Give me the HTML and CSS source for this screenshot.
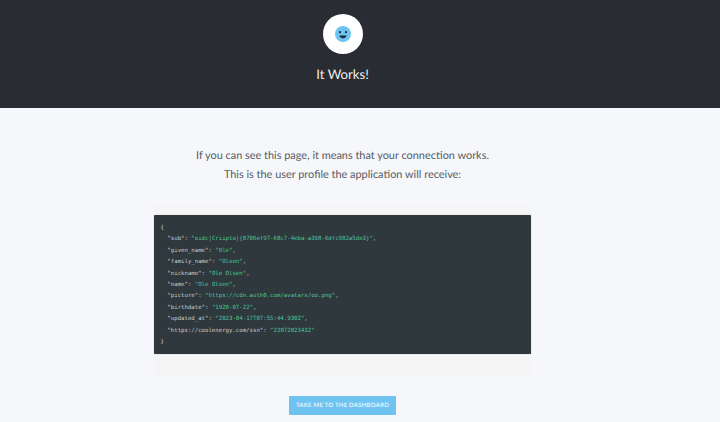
FILE: index.html
```html
<!DOCTYPE html>
<html lang="en">
<head>
<meta charset="utf-8">
<title>It Works!</title>
<link rel="stylesheet" href="styles.css">
</head>
<body>
<header class="hero">
  <div class="avatar">
    <svg class="face" viewBox="0 0 18 18" width="16" height="16" aria-hidden="true">
      <circle cx="9" cy="9" r="9" fill="#6ec3f0"/>
      <circle cx="5.6" cy="6.9" r="1.2" fill="#1f2a3a"/>
      <circle cx="12.4" cy="6.9" r="1.2" fill="#1f2a3a"/>
      <path d="M5 10.6h8c-.4 2-2 3.2-4 3.2s-3.6-1.2-4-3.2z" fill="#1f2a3a"/>
    </svg>
  </div>
  <h1 class="title">It Works!</h1>
</header>
<main class="content">
  <p class="lead">If you can see this page, it means that your connection works.</p>
  <p class="lead">This is the user profile the application will receive:</p>
  <div class="code-well">
<pre class="code">{
  <span class="key">"sub"</span>: <span class="str">"oidc|Criipto|{8706ef97-68c7-4eba-a398-6dfc982a5de3}"</span>,
  <span class="key">"given_name"</span>: <span class="str">"Ole"</span>,
  <span class="key">"family_name"</span>: <span class="str">"Olsen"</span>,
  <span class="key">"nickname"</span>: <span class="str">"Ole Olsen"</span>,
  <span class="key">"name"</span>: <span class="str">"Ole Olsen"</span>,
  <span class="key">"picture"</span>: <span class="str">"https://cdn.auth0.com/avatars/oo.png"</span>,
  <span class="key">"birthdate"</span>: <span class="str">"1920-07-22"</span>,
  <span class="key">"updated_at"</span>: <span class="str">"2023-04-17T07:55:44.930Z"</span>,
  <span class="key">"https://coolenergy.com/ssn"</span>: <span class="str">"22072023432"</span>
}</pre>
  </div>
  <a class="button" href="#">TAKE ME TO THE DASHBOARD</a>
</main>
</body>
</html>
```

FILE: styles.css
```css
* { box-sizing: border-box; }
html, body { margin: 0; padding: 0; }
body {
  width: 720px;
  height: 422px;
  overflow: hidden;
  background: #f5f7fb;
  font-family: "Lato", "Open Sans", sans-serif;
  text-rendering: geometricPrecision;
}
.hero {
  height: 108px;
  padding: 14px 35px 0 0;
  background: #2a2c33;
  display: flex;
  flex-direction: column;
  align-items: center;
}
.avatar {
  width: 40px;
  height: 40px;
  border-radius: 50%;
  background: #fff;
  display: flex;
  align-items: center;
  justify-content: center;
}
.face { display: block; }
.title {
  margin: 10px 0 0;
  font-size: 13.2px;
  line-height: 20px;
  font-weight: 400;
  color: #f0f0f0;
}
.content {
  display: flex;
  flex-direction: column;
  align-items: center;
  padding: 39px 35px 0 0;
}
.lead {
  margin: 0;
  font-size: 10.92px;
  line-height: 18.5px;
  font-weight: 400;
  color: #555a62;
}
.code-well {
  width: 377px;
  margin-top: 21px;
  padding: 10px 0 22px;
  background: #f5f5f5;
}
.code {
  margin: 0;
  height: 139px;
  padding: 8px 6.5px 5px;
  background: #2f383c;
  border-radius: 1px;
  box-shadow: 0 0 1px rgba(0,0,0,.4);
  font-family: "DejaVu Sans Mono", monospace;
  font-size: 5.7px;
  line-height: 11.4px;
  color: #c8cdcf;
}
.key { color: #c8cdcf; }
.str { color: #4cc79e; }
.button {
  margin-top: 20px;
  width: 107px;
  height: 18.5px;
  display: flex;
  align-items: center;
  justify-content: center;
  background: #6ec3f0;
  border-radius: 1px;
  color: #e6f4fc;
  font-size: 6.05px;
  font-weight: 700;
  letter-spacing: .22px;
  text-decoration: none;
}
```
